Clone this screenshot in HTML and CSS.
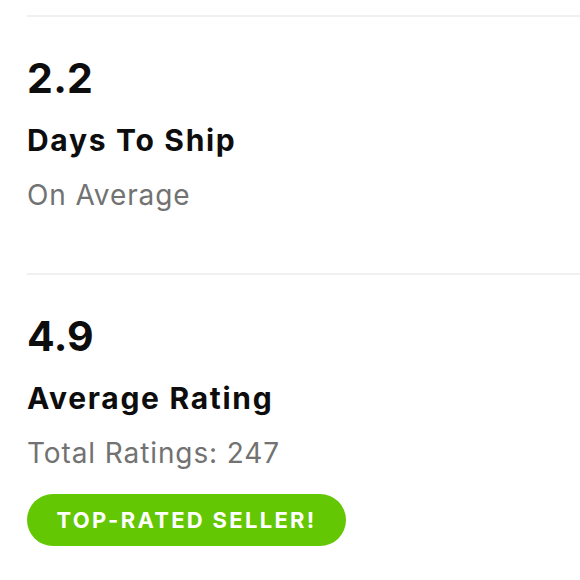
FILE: index.html
```html
<!DOCTYPE html>
<html lang="en">
<head>
<meta charset="utf-8">
<title>Seller stats</title>
<link rel="stylesheet" href="styles.css">
</head>
<body>
<main class="stats">
  <section class="stat">
    <div class="value">2.2</div>
    <div class="label">Days To Ship</div>
    <div class="sub">On Average</div>
  </section>
  <section class="stat">
    <div class="value">4.9</div>
    <div class="label">Average Rating</div>
    <div class="sub">Total Ratings: 247</div>
    <div class="badge">TOP-RATED SELLER!</div>
  </section>
</main>
</body>
</html>
```

FILE: styles.css
```css
html, body {
  margin: 0;
  padding: 0;
  background: #ffffff;
}

body {
  font-family: Inter, Lato, "Liberation Sans", sans-serif;
  color: #0d0d0d;
  overflow: hidden;
}

.stats {
  padding: 15px 0 0 27px;
}

.stat {
  border-top: 2px solid #f1efef;
  padding: 37px 0 61px 0;
}

.value {
  font-size: 41px;
  font-weight: 700;
  line-height: 48px;
  letter-spacing: 0.3px;
}

.label {
  margin-top: 21px;
  font-size: 30px;
  font-weight: 700;
  line-height: 34px;
  letter-spacing: 1.7px;
}

.sub {
  margin-top: 21px;
  font-size: 28px;
  font-weight: 400;
  line-height: 34px;
  letter-spacing: 0.9px;
  color: #727272;
}

.badge {
  display: inline-flex;
  align-items: center;
  justify-content: center;
  margin-top: 24px;
  width: 319px;
  height: 52px;
  border-radius: 26px;
  background: #64c703;
  color: #ffffff;
  font-size: 22px;
  font-weight: 700;
  letter-spacing: 2.3px;
}
```
